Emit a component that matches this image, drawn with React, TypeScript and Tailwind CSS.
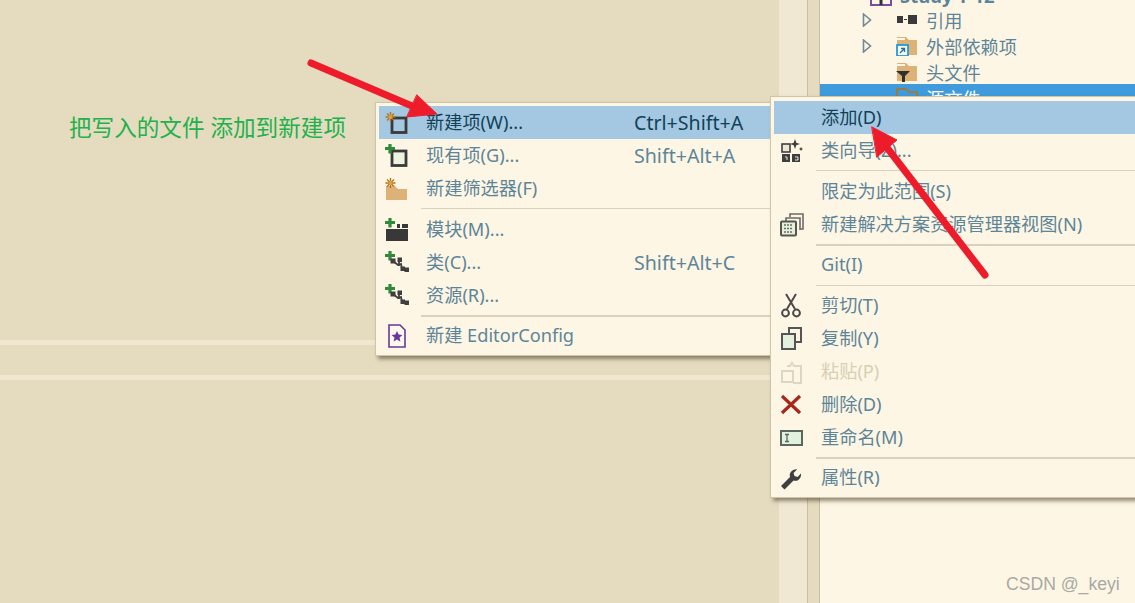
import type { ReactNode } from "react";

const FONT = "font-['Noto_Sans','Noto_Sans_CJK_SC',sans-serif]";

function Svg({ children }: { children: ReactNode }) {
  return (
    <svg width="26" height="26" viewBox="0 0 26 26" className="block">
      {children}
    </svg>
  );
}

function Sun({ x = 6.5, y = 7 }: { x?: number; y?: number }) {
  return (
    <g stroke="#b5731b" strokeWidth="1.4">
      <path d={`M${x - 5} ${y}h10M${x} ${y - 5}v10M${x - 3.5} ${y - 3.5}l7 7M${x + 3.5} ${y - 3.5}l-7 7`} />
      <circle cx={x} cy={y} r="2" fill="#e0a040" stroke="none" />
    </g>
  );
}

function Plus() {
  return <path d="M6 1v9.500M1 5.500h10" stroke="#2f8a3c" strokeWidth="3.200" />;
}

function Box({ fill = "none" }: { fill?: string }) {
  return <rect x="8" y="8" width="14" height="14.500" fill={fill} stroke="#3a3a3a" strokeWidth="2.800" />;
}

function ClassGlyph() {
  return (
    <g fill="none" stroke="#3f3f3f">
      <path d="M9 11l5 4 3-1 1 5 5 1" strokeWidth="1.800" />
      <path d="M15 9v7" strokeWidth="1.800" />
      <rect x="7" y="9" width="4" height="4" fill="#3f3f3f" strokeWidth="1" />
      <rect x="14" y="8" width="3.500" height="3.500" fill="#3f3f3f" strokeWidth="1" />
      <rect x="17" y="17" width="3.500" height="3.500" fill="#3f3f3f" strokeWidth="1" />
      <rect x="21" y="18" width="3.500" height="3.500" fill="#3f3f3f" strokeWidth="1" />
    </g>
  );
}

const Icons: Record<string, ReactNode> = {
  newItem: (
    <Svg>
      <Box />
      <Sun />
    </Svg>
  ),
  existing: (
    <Svg>
      <Box fill="#eef3df" />
      <Plus />
    </Svg>
  ),
  newFilter: (
    <Svg>
      <path d="M2 10h9l3 3h9v11H2z" fill="#dcb277" />
      <Sun />
    </Svg>
  ),
  module: (
    <Svg>
      <path d="M2 12h22v12H2z" fill="#383838" />
      <rect x="13" y="7" width="3" height="4" fill="#383838" />
      <rect x="18" y="7" width="6" height="4" fill="#383838" />
      <Plus />
    </Svg>
  ),
  cls: (
    <Svg>
      <Plus />
      <ClassGlyph />
    </Svg>
  ),
  editorConfig: (
    <Svg>
      <path d="M5 2h11l5 5v17H5z" fill="#fff8ec" stroke="#68389a" strokeWidth="1.600" />
      <path d="M13 8l1.600 3.600 3.900.4-3 2.600.9 3.900-3.400-2-3.400 2 .9-3.900-3-2.600 3.900-.4z" fill="#68389a" />
    </Svg>
  ),
  wizard: (
    <Svg>
      <rect x="3" y="6" width="8" height="8" fill="#eee6d0" stroke="#3f3f3f" strokeWidth="1.600" />
      <rect x="3" y="16" width="8" height="8" fill="#3f3f3f" />
      <rect x="13" y="16" width="8" height="8" fill="#3f3f3f" />
      <path d="M6 19h2v3M16 19h3v3h-3" stroke="#eee6d0" fill="none" />
      <path d="M16 1l1.300 3.700L21 6l-3.700 1.300L16 11l-1.300-3.700L11 6l3.700-1.300zM22 9l.7 1.300L24 11l-1.300.7L22 13l-.7-1.300L20 11l1.300-.7z" fill="#3f3f3f" />
    </Svg>
  ),
  slnView: (
    <Svg>
      <path d="M11 5V2h13v15h-3" fill="none" stroke="#6b6b66" strokeWidth="1.600" />
      <path d="M7 9V6h14v12" fill="none" stroke="#6b6b66" strokeWidth="1.600" />
      <rect x="2" y="9.500" width="15" height="14" rx="1" fill="#e4f0dc" stroke="#55554f" strokeWidth="2" />
      <path d="M5 13h9M5 16.500h9M5 20h9" stroke="#6b6b66" strokeWidth="1.600" strokeDasharray="2 1" />
    </Svg>
  ),
  cut: (
    <Svg>
      <path d="M7 1l9 15M17 1L8 16" stroke="#4a4a4a" strokeWidth="2" />
      <circle cx="6.500" cy="20" r="3.400" fill="none" stroke="#4a4a4a" strokeWidth="2" />
      <circle cx="17.500" cy="20" r="3.400" fill="none" stroke="#4a4a4a" strokeWidth="2" />
    </Svg>
  ),
  copy: (
    <Svg>
      <path d="M10 7V2h12v14h-5" fill="none" stroke="#555" strokeWidth="2" />
      <rect x="3" y="8" width="13" height="15" fill="#e2f0dd" stroke="#555" strokeWidth="2" />
    </Svg>
  ),
  paste: (
    <Svg>
      <path d="M8 7h3l2-3 2 3h7v17h-8" fill="none" stroke="#dcd6c8" strokeWidth="2" />
      <rect x="3" y="12" width="11" height="11" fill="none" stroke="#dcd6c8" strokeWidth="2" />
    </Svg>
  ),
  remove: (
    <Svg>
      <path d="M3 4l18 17M21 4L3 21" stroke="#a5281b" strokeWidth="3.200" />
    </Svg>
  ),
  rename: (
    <Svg>
      <rect x="2" y="6" width="21" height="14" fill="#e1f1de" stroke="#5c6660" strokeWidth="2" />
      <path d="M6 9.500h4M6 16.500h4M8 9.500v7" stroke="#5c6660" strokeWidth="1.300" />
    </Svg>
  ),
  wrench: (
    <Svg>
      <path
        d="M2 21l9-9c-1-4 2-8 7-7.600l-3.500 3.600 1 3 3 1 3.500-3.600c.6 5-3.500 8.500-7.500 7.200L5.500 24.500z"
        fill="#3f3f3f"
      />
    </Svg>
  ),
};

type Row =
  | { sep: true; thick?: boolean; tall?: boolean; low?: boolean }
  | { sep?: false; label: string; keys?: string; icon?: string; active?: boolean; disabled?: boolean };

const addItems: Row[] = [
  { label: "新建项(W)...", keys: "Ctrl+Shift+A", icon: "newItem", active: true },
  { label: "现有项(G)...", keys: "Shift+Alt+A", icon: "existing" },
  { label: "新建筛选器(F)", icon: "newFilter" },
  { sep: true, tall: true },
  { label: "模块(M)...", icon: "module" },
  { label: "类(C)...", keys: "Shift+Alt+C", icon: "cls" },
  { label: "资源(R)...", icon: "cls" },
  { sep: true, thick: true },
  { label: "新建 EditorConfig", icon: "editorConfig" },
];

const contextItems: Row[] = [
  { label: "添加(D)", active: true },
  { label: "类向导(Z)...", icon: "wizard" },
  { sep: true, tall: true },
  { label: "限定为此范围(S)" },
  { label: "新建解决方案资源管理器视图(N)", icon: "slnView" },
  { sep: true, thick: true },
  { label: "Git(I)" },
  { sep: true, tall: true, low: true },
  { label: "剪切(T)", icon: "cut" },
  { label: "复制(Y)", icon: "copy" },
  { label: "粘贴(P)", icon: "paste", disabled: true },
  { label: "删除(D)", icon: "remove" },
  { label: "重命名(M)", icon: "rename" },
  { sep: true, thick: true },
  { label: "属性(R)", icon: "wrench" },
];

function Menu({ items, className }: { items: Row[]; className: string }) {
  return (
    <div
      className={`absolute border border-[#cfc6a8] bg-[#fef6e4] shadow-[3px_3px_4px_rgba(60,50,30,0.55)] ${className}`}
    >
      {items.map((item, i) =>
        item.sep ? (
          <div
            key={i}
            className={`pl-[42px] ${item.tall ? "h-[8px]" : "h-[7px]"} ${item.low ? "pt-[4px]" : "pt-[3px]"}`}
          >
            <div className={`w-full bg-[#d9d1bc] ${item.thick ? "h-[2px]" : "h-px"}`} />
          </div>
        ) : (
          <div
            key={i}
            className={`flex h-[33px] items-center text-[18.2px] ${
              item.active
                ? "bg-[#a5c8e2] text-[#0f4258]"
                : item.disabled
                  ? "text-[#d8cfb4]"
                  : "text-[#5d8599]"
            }`}
          >
            <div className="w-[47px] pl-[5px]">{item.icon && Icons[item.icon]}</div>
            <span className="flex-1 whitespace-nowrap">{item.label}</span>
            {item.keys && <span className="w-[137px] text-[19.6px] whitespace-nowrap">{item.keys}</span>}
          </div>
        ),
      )}
    </div>
  );
}

function Chevron() {
  return (
    <svg width="10" height="14" viewBox="0 0 10 14">
      <path d="M1.500 1l7 6-7 6z" fill="none" stroke="#6f8a96" strokeWidth="1.600" />
    </svg>
  );
}

function Folder({ children }: { children?: ReactNode }) {
  return (
    <svg width="22" height="22" viewBox="0 0 22 22">
      <path d="M1 3h9l3 3h8v15H1z" fill="#dcb277" />
      <path d="M1 4h8v2H1z" fill="#fef6e4" />
      {children}
    </svg>
  );
}

function TreeRow({
  label,
  icon,
  chevron,
  selected,
}: {
  label: string;
  icon: ReactNode;
  chevron?: boolean;
  selected?: boolean;
}) {
  return (
    <div
      className={`flex h-[26px] items-center text-[18.2px] ${
        selected ? "bg-[#3f9bdc] text-white" : "text-[#5d8599]"
      }`}
    >
      <div className="flex w-[52px] justify-end pt-[2px]">{chevron && <Chevron />}</div>
      <div className="ml-[24px] flex w-[30px]">{icon}</div>
      <span className="pt-[5px]">{label}</span>
    </div>
  );
}

export default function App() {
  return (
    <div className={`relative flex h-[603px] w-[1135px] overflow-hidden bg-[#e5dcc0] ${FONT}`}>
      {/* editor */}
      <main className="w-[779px] shrink-0 pt-[113px]">
        <p className="pl-[69px] text-[22.6px] leading-[30px] whitespace-nowrap text-[#22b14c]">
          把写入的文件 添加到新建项
        </p>
        <div className="mt-[197px] h-[5px] bg-[#efe7d1]" />
        <div className="mt-[30px] h-[5px] bg-[#efe7d1]" />
      </main>

      <div className="w-[29px] shrink-0 border-r border-[#c9bfa3] bg-[#f0e8d3]" />
      <div className="w-[12px] shrink-0 border-r border-[#c9bfa3]" />

      {/* solution explorer */}
      <aside className="flex-1 bg-[#fef6e4] pt-[6px]">
        <div className="-mt-[26px] flex h-[26px] items-center pt-[6px] pl-[50px] text-[18.5px] font-bold whitespace-nowrap text-[#5d8599]">
          <svg width="22" height="22" viewBox="0 0 22 22" className="mr-[8px]">
            <rect x="1" y="2" width="20" height="18" fill="none" stroke="#7a4aa5" strokeWidth="2" />
            <path d="M11 12v8" stroke="#333" strokeWidth="3" />
          </svg>
          <span>Study-T-12</span>
        </div>
        <TreeRow
          label="引用"
          chevron
          icon={
            <svg width="22" height="22" viewBox="0 0 22 22">
              <rect x="1" y="8" width="6" height="7" fill="#3a3a3a" />
              <path d="M8 11.500h3" stroke="#3a3a3a" />
              <rect x="12" y="7" width="9" height="9" fill="#3a3a3a" />
            </svg>
          }
        />
        <TreeRow
          label="外部依赖项"
          chevron
          icon={
            <Folder>
              <rect x="1" y="11" width="11" height="11" fill="#fef6e4" stroke="#1e9be0" strokeWidth="1.800" />
              <path d="M4 19l4-4M5 14.500h3.500v3.500" fill="none" stroke="#1e6fb0" strokeWidth="1.300" />
            </Folder>
          }
        />
        <TreeRow
          label="头文件"
          icon={
            <Folder>
              <path d="M0 11h14l-5 5v6H6v-6z" fill="#2f2f2f" />
            </Folder>
          }
        />
        <TreeRow
          label="源文件"
          selected
          icon={
            <svg width="22" height="22" viewBox="0 0 22 22">
              <path d="M1 3h9l3 3h8v15H1z" fill="none" stroke="#b5731b" strokeWidth="1.600" />
            </svg>
          }
        />
      </aside>

      <Menu items={addItems} className="top-[102px] left-[375px] w-[400px] p-[3px]" />
      <Menu items={contextItems} className="top-[96px] left-[770px] w-[380px] px-[3px] pt-[4px] pb-[3px]" />

      {/* annotation arrows */}
      <svg className="pointer-events-none absolute inset-0" width="1135" height="603" viewBox="0 0 1135 603">
        <g fill="#ee1c2b" stroke="#ee1c2b" strokeLinecap="round">
          <path d="M311 63L412 106" strokeWidth="7" fill="none" />
          <path d="M417 95L437 114L407 117z" strokeWidth="1" />
          <path d="M985 275L885 145" strokeWidth="7" fill="none" />
          <path d="M872 127L897 140L877 157z" strokeWidth="1" />
        </g>
      </svg>

      <span className="absolute top-[571px] left-[1006px] font-['Liberation_Sans',sans-serif] text-[17.6px] whitespace-nowrap text-[#a9a9a4]">
        CSDN @_keyi
      </span>
    </div>
  );
}
